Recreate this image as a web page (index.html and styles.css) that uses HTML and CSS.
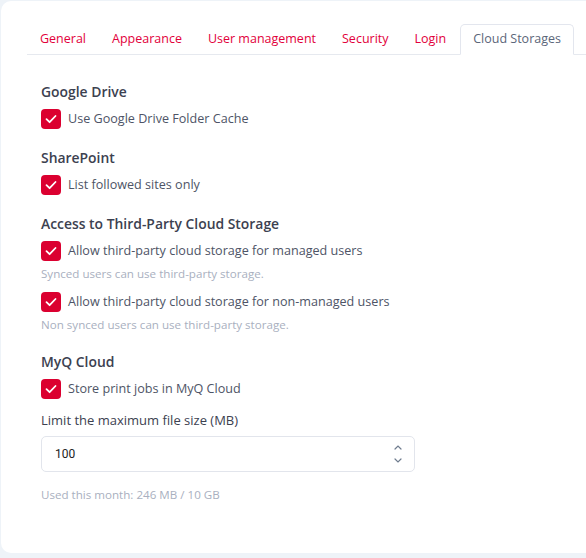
FILE: index.html
```html
<!DOCTYPE html>
<html>
<head>
<meta charset="utf-8">
<link rel="stylesheet" href="styles.css">
</head>
<body>
<div class="card">
  <div class="tabs">
    <div class="tab">General</div>
    <div class="tab">Appearance</div>
    <div class="tab">User management</div>
    <div class="tab">Security</div>
    <div class="tab">Login</div>
    <div class="tab active">Cloud Storages</div>
  </div>
  <div class="content">
    <div class="heading">Google Drive</div>
    <label class="check"><span class="box"><svg viewBox="0 0 20 20" width="20" height="20"><path d="M5.5 10.2 L8.6 13.2 L14.5 7" fill="none" stroke="#fff" stroke-width="1.8" stroke-linecap="round" stroke-linejoin="round"/></svg></span>Use Google Drive Folder Cache</label>

    <div class="heading sp">SharePoint</div>
    <label class="check"><span class="box"><svg viewBox="0 0 20 20" width="20" height="20"><path d="M5.5 10.2 L8.6 13.2 L14.5 7" fill="none" stroke="#fff" stroke-width="1.8" stroke-linecap="round" stroke-linejoin="round"/></svg></span>List followed sites only</label>

    <div class="heading sp">Access to Third-Party Cloud Storage</div>
    <label class="check"><span class="box"><svg viewBox="0 0 20 20" width="20" height="20"><path d="M5.5 10.2 L8.6 13.2 L14.5 7" fill="none" stroke="#fff" stroke-width="1.8" stroke-linecap="round" stroke-linejoin="round"/></svg></span>Allow third-party cloud storage for managed users</label>
    <div class="hint">Synced users can use third-party storage.</div>
    <label class="check after-hint"><span class="box"><svg viewBox="0 0 20 20" width="20" height="20"><path d="M5.5 10.2 L8.6 13.2 L14.5 7" fill="none" stroke="#fff" stroke-width="1.8" stroke-linecap="round" stroke-linejoin="round"/></svg></span>Allow third-party cloud storage for non-managed users</label>
    <div class="hint">Non synced users can use third-party storage.</div>

    <div class="heading sp">MyQ Cloud</div>
    <label class="check"><span class="box"><svg viewBox="0 0 20 20" width="20" height="20"><path d="M5.5 10.2 L8.6 13.2 L14.5 7" fill="none" stroke="#fff" stroke-width="1.8" stroke-linecap="round" stroke-linejoin="round"/></svg></span>Store print jobs in MyQ Cloud</label>

    <div class="field-label">Limit the maximum file size (MB)</div>
    <div class="input">
      <span class="value">100</span>
      <span class="spin">
        <svg width="10" height="6" viewBox="0 0 10 6"><path d="M2 5 L5 2 L8 5" fill="none" stroke="#6f7c8e" stroke-width="1.2" stroke-linecap="round"/></svg>
        <svg width="10" height="6" viewBox="0 0 10 6"><path d="M2 1 L5 4 L8 1" fill="none" stroke="#6f7c8e" stroke-width="1.2" stroke-linecap="round"/></svg>
      </span>
    </div>
    <div class="hint used">Used this month: 246 MB / 10 GB</div>
  </div>
</div>
</body>
</html>
```
FILE: styles.css
```css
html, body {
  margin: 0;
  padding: 0;
}
body {
  background: #eef3f8;
  width: 586px;
  height: 558px;
  overflow: hidden;
  font-family: "Open Sans", "Noto Sans", sans-serif;
}
.card {
  margin: 1px 0 0 1px;
  background: #fff;
  border-radius: 10px 0 0 10px;
  height: 552px;
  padding: 23px 0 0 26px;
  box-sizing: border-box;
}
.tabs {
  display: flex;
  border-bottom: 1px solid #e6e9ef;
  height: 30px;
}
.tab {
  padding: 0 13px;
  font-size: 12.5px;
  color: #e2003b;
  line-height: 29px;
  height: 30px;
  box-sizing: border-box;
  white-space: nowrap;
}
.tab.active {
  margin-left: 1px;
  padding: 0 12px;
  color: #5b6679;
  border: 1px solid #e3e6ee;
  border-bottom: 1px solid #fff;
  border-radius: 5px 5px 0 0;
  line-height: 28px;
  height: 31px;
  background: #fff;
}
.content {
  display: flex;
  flex-direction: column;
  align-items: flex-start;
  padding-left: 14px;
  padding-top: 27px;
}
.heading {
  font-size: 13.9px;
  font-weight: 600;
  color: #3c4150;
  line-height: 20px;
}
.heading.sp {
  margin-top: 19px;
}
.check {
  display: flex;
  align-items: center;
  gap: 7px;
  margin-top: 7px;
  font-size: 12.6px;
  color: #4e5466;
  line-height: 20px;
  white-space: nowrap;
}
.check.after-hint {
  margin-top: 10px;
}
.box {
  width: 20px;
  height: 20px;
  border-radius: 4px;
  background: #db0030;
  display: block;
  flex: none;
}
.box svg {
  display: block;
}
.hint {
  font-size: 11.6px;
  color: #a9b0c0;
  line-height: 16px;
  margin-top: 5px;
  white-space: nowrap;
}
.field-label {
  margin-top: 11px;
  font-size: 13px;
  color: #3c4150;
  line-height: 20px;
}
.input {
  margin-top: 6px;
  width: 374px;
  height: 36px;
  box-sizing: border-box;
  border: 1px solid #e2e5ec;
  border-radius: 5px;
  display: flex;
  align-items: center;
  justify-content: space-between;
  padding: 0 11px 0 13px;
}
.value {
  font-family: "Roboto", "Liberation Sans", sans-serif;
  font-size: 12px;
  color: #222;
}
.spin {
  display: flex;
  flex-direction: column;
  gap: 8px;
}
.spin svg {
  display: block;
}
.hint.used {
  margin-top: 15px;
}
```
